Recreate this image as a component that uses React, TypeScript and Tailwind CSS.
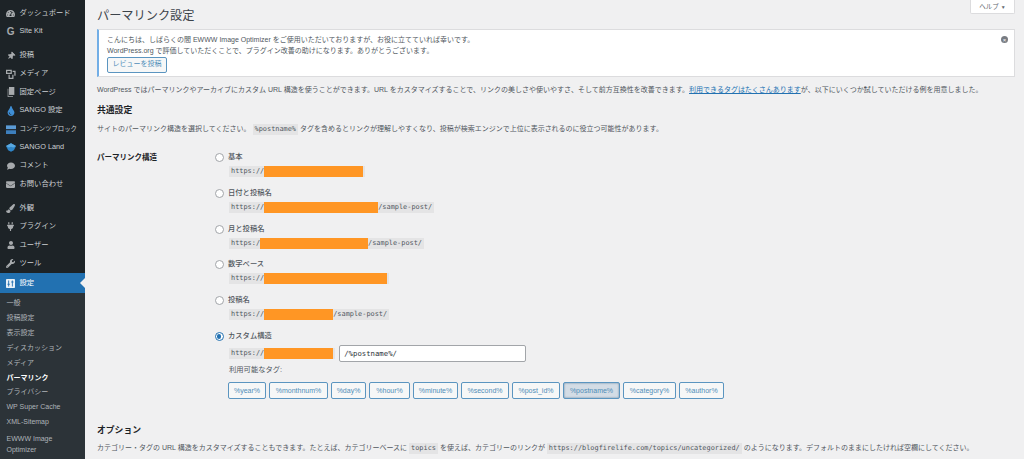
import { ReactNode } from "react";
import {
  FaComment,
  FaEnvelope,
  FaPaintBrush,
  FaPlug,
  FaTachometerAlt,
  FaThumbtack,
  FaTint,
  FaUser,
  FaWrench,
} from "react-icons/fa";

const jp = "font-['Liberation_Sans','Noto_Sans_CJK_JP',sans-serif]";
const mono = "font-['DejaVu_Sans_Mono','Noto_Sans_CJK_JP',monospace]";

function MediaIcon() {
  return (
    <svg viewBox="0 0 12 12" className="w-[10px] h-[10px]" fill="currentColor">
      <path d="M0 1h7v5H0z M1.500 2.500v2h4v-2z" fillRule="evenodd" />
      <path d="M3 7h1.500v3.500h3V7H9v5H3z" />
      <path d="M8 2h3.500v6H10V3.500H8z" />
    </svg>
  );
}

function PageIcon() {
  return (
    <svg viewBox="0 0 12 12" className="w-[8px] h-[10px]" fill="currentColor" preserveAspectRatio="none">
      <path d="M3 0h8v9.500H3z" />
      <path d="M1 2h1v9h7v1H1z" />
    </svg>
  );
}

function BlocksIcon() {
  return (
    <svg viewBox="0 0 14 12" className="w-[10px] h-[9px]" preserveAspectRatio="none">
      <rect x="0" y="0.500" width="14" height="5" fill="#5b9bd5" />
      <rect x="0" y="7" width="14" height="5" fill="#3d7fbd" />
    </svg>
  );
}

function LandIcon() {
  return (
    <svg viewBox="0 0 14 12" className="w-[10px] h-[9px]">
      <path d="M7 0l7 4-3 6-4 2-4-2-3-6z" fill="#2f86c9" />
      <path d="M0 4l7-4 7 4-4 2-3-1-3 1z" fill="#5aa9e0" />
    </svg>
  );
}

function SettingsIcon() {
  return (
    <svg viewBox="0 0 12 12" className="w-[9px] h-[9px]">
      <rect width="12" height="12" rx="1" fill="#e8f1f8" />
      <path d="M3.500 2v8M8.500 2v8" stroke="#2271b1" strokeWidth="1.200" />
      <path d="M2 7h3M7 4h3" stroke="#2271b1" strokeWidth="1.400" />
    </svg>
  );
}

type MenuItem = { label: string; icon: ReactNode; gap?: boolean; small?: boolean };

const menu: MenuItem[] = [
  { label: "ダッシュボード", icon: <FaTachometerAlt size={9} /> },
  { label: "Site Kit", icon: <span className="font-bold text-[10px] leading-none">G</span> },
  { label: "投稿", icon: <FaThumbtack size={8} className="rotate-45" />, gap: true },
  { label: "メディア", icon: <MediaIcon /> },
  { label: "固定ページ", icon: <PageIcon /> },
  { label: "SANGO 設定", icon: <FaTint size={10} color="#3f8fd6" /> },
  { label: "コンテンツブロック", icon: <BlocksIcon />, small: true },
  { label: "SANGO Land", icon: <LandIcon /> },
  { label: "コメント", icon: <FaComment size={8} /> },
  { label: "お問い合わせ", icon: <FaEnvelope size={9} /> },
  { label: "外観", icon: <FaPaintBrush size={9} />, gap: true },
  { label: "プラグイン", icon: <FaPlug size={9} /> },
  { label: "ユーザー", icon: <FaUser size={8} /> },
  { label: "ツール", icon: <FaWrench size={9} /> },
];

const submenu = [
  "一般",
  "投稿設定",
  "表示設定",
  "ディスカッション",
  "メディア",
  "パーマリンク",
  "プライバシー",
  "WP Super Cache",
  "XML-Sitemap",
];

function Sidebar() {
  return (
    <aside className="w-[85px] shrink-0 bg-[#1d2327] text-[#ccd0d3] pt-[4px] text-[7.300px]">
      {menu.map((m) => (
        <div key={m.label} className={`flex items-center h-[18.4px] ${m.gap ? "mt-[5.6px]" : ""}`}>
          <span className="w-[19.500px] pl-[4px] pr-[2px] flex justify-center text-[#a7aaad] shrink-0">{m.icon}</span>
          <span className={`whitespace-nowrap ${m.small ? "text-[6.400px]" : ""}`}>{m.label}</span>
        </div>
      ))}
      <div className="relative flex items-center h-[19.500px] mt-[0.800px] bg-[#2271b1] text-white">
        <span className="w-[19.500px] pl-[4px] pr-[2px] flex justify-center shrink-0">
          <SettingsIcon />
        </span>
        <span>設定</span>
        <span className="absolute right-0 top-[5px] w-0 h-0 border-y-[5px] border-y-transparent border-r-[5px] border-r-[#f0f0f1]" />
      </div>
      <div className="bg-[#2c3338] text-[#aeb3b8] pl-[6.500px] pt-[3px] h-[200px] text-[7px]">
        {submenu.map((s) => (
          <div
            key={s}
            className={`h-[14.900px] flex items-center whitespace-nowrap ${s === "パーマリンク" ? "font-bold text-white" : ""}`}
          >
            {s}
          </div>
        ))}
        <div className="leading-[11px] pt-[3px]">
          EWWW Image
          <br />
          Optimizer
        </div>
      </div>
    </aside>
  );
}

function Code({ children, className = "" }: { children: ReactNode; className?: string }) {
  return (
    <code className={`${mono} inline-block bg-[#e4e4e5] text-[#50575e] text-[6.900px] leading-[11px] px-[2px] ${className}`}>
      {children}
    </code>
  );
}

function Mask({ className }: { className: string }) {
  return <span className={`inline-block align-top h-[11px] bg-[#ff9624] ${className}`} />;
}

function Radio({ checked = false }: { checked?: boolean }) {
  return (
    <span
      className={`w-[9px] h-[9px] rounded-full border bg-white flex items-center justify-center shrink-0 ${
        checked ? "border-[#2271b1]" : "border-[#a2a5a9]"
      }`}
    >
      {checked && <span className="w-[4.500px] h-[4.500px] rounded-full bg-[#2271b1]" />}
    </span>
  );
}

function Option({ label, children, checked }: { label: string; children: ReactNode; checked?: boolean }) {
  return (
    <div className="h-[35.800px]">
      <div className="flex items-center gap-[4.500px] h-[11px] -ml-[14.500px] text-[7.300px] font-medium">
        <Radio checked={checked} />
        <span>{label}</span>
      </div>
      <div className="mt-[3px] flex items-start">{children}</div>
    </div>
  );
}

const tags = [
  { name: "%year%", w: "w-[38px]" },
  { name: "%monthnum%", w: "w-[59px]" },
  { name: "%day%", w: "w-[35px]" },
  { name: "%hour%", w: "w-[41px]" },
  { name: "%minute%", w: "w-[45px]" },
  { name: "%second%", w: "w-[48px]" },
  { name: "%post_id%", w: "w-[48px]" },
  { name: "%postname%", w: "w-[57px]", active: true },
  { name: "%category%", w: "w-[53px]" },
  { name: "%author%", w: "w-[45px]" },
];

export default function App() {
  return (
    <div className={`${jp} flex w-[1024px] h-[459px] overflow-hidden bg-[#f0f0f1] text-[#50575e]`}>
      <Sidebar />
      <main className="relative flex-1 min-w-0 pl-[12px] pr-[9px] text-[7px]">
        <button className="absolute right-[9px] top-0 w-[45px] h-[14px] bg-white border border-t-0 border-[#dcdcde] rounded-b-[2px] text-[6.500px] text-[#646970]">
          ヘルプ <span className="text-[5px]">▼</span>
        </button>

        <h1 className="text-[12.200px] leading-[18px] pt-[7px] pb-[1px] font-normal text-[#3c434a]">パーマリンク設定</h1>

        <div className="relative mt-[3px] h-[48px] bg-white border border-[#dcdcde] border-l-2 border-l-[#72aee6] pl-[8px] pt-[4px]">
          <p className="leading-[11px] whitespace-nowrap">こんにちは、しばらくの間 EWWW Image Optimizer をご使用いただいておりますが、お役に立てていれば幸いです。</p>
          <p className="leading-[11px] whitespace-nowrap">WordPress.org で評価していただくことで、プラグイン改善の助けになります。ありがとうございます。</p>
          <button className="mt-[0.500px] w-[60px] h-[16px] border border-[#5b95c0] rounded-[2px] bg-[#f6f7f7] text-[#4f8db8] text-[7px]">
            レビューを投稿
          </button>
          <span className="absolute right-[6px] top-[6px] w-[7px] h-[7px] rounded-full bg-[#787c82] flex items-center justify-center text-white text-[6px] leading-none">
            ×
          </span>
        </div>

        <p className="mt-[7px] leading-[11px] whitespace-nowrap">
          WordPress ではパーマリンクやアーカイブにカスタム URL 構造を使うことができます。URL をカスタマイズすることで、リンクの美しさや使いやすさ、そして前方互換性を改善できます。
          <a className="text-[#2271b1] underline">利用できるタグはたくさんあります</a>
          が、以下にいくつか試していただける例を用意しました。
        </p>

        <h2 className="mt-[9px] text-[8.800px] leading-[12px] font-bold text-[#1d2327]">共通設定</h2>

        <p className="mt-[7px] leading-[11px] whitespace-nowrap">
          サイトのパーマリンク構造を選択してください。 <Code>%postname%</Code> タグを含めるとリンクが理解しやすくなり、投稿が検索エンジンで上位に表示されるのに役立つ可能性があります。
        </p>

        <div className="flex mt-[17px]">
          <div className="w-[132px] shrink-0 text-[7.500px] leading-[11px] font-bold text-[#1d2327]">パーマリンク構造</div>
          <div className="flex-1">
            <Option label="基本">
              <Code>
                https://
                <Mask className="w-[99px]" />
              </Code>
            </Option>
            <Option label="日付と投稿名">
              <Code>
                https://
                <Mask className="w-[114px]" />
                /sample-post/
              </Code>
            </Option>
            <Option label="月と投稿名">
              <Code>
                https:/
                <Mask className="w-[108px]" />
                /sample-post/
              </Code>
            </Option>
            <Option label="数字ベース">
              <Code>
                https://
                <Mask className="w-[123px]" />
              </Code>
            </Option>
            <Option label="投稿名">
              <Code>
                https://
                <Mask className="w-[69px]" />
                /sample-post/
              </Code>
            </Option>
            <Option label="カスタム構造" checked>
              <Code className="mt-[3px]">
                https://
                <Mask className="w-[69px]" />
              </Code>
              <input
                readOnly
                value="/%postname%/"
                className={`${mono} ml-[4px] w-[187px] h-[17px] bg-white border border-[#a2a5a9] rounded-[2px] px-[4px] text-[7.300px] text-[#2c3338]`}
              />
            </Option>
            <p className="-mt-[3px] leading-[11px] text-[7.300px]">利用可能なタグ:</p>
            <div className="flex gap-[3px] mt-[7px] -ml-[1px]">
              {tags.map((t) => (
                <button
                  key={t.name}
                  className={`${t.w} h-[17px] border border-[#5b95c0] rounded-[2px] text-[#4f8db8] text-[7px] leading-none ${
                    t.active ? "bg-[#d3dce5] border-[#4f7c9e] text-[#3f7ba5] shadow-[inset_0_0_2px_#5a7a96]" : "bg-[#f6f7f7]"
                  }`}
                >
                  {t.name}
                </button>
              ))}
            </div>
          </div>
        </div>

        <h2 className="mt-[25px] text-[8.800px] leading-[12px] font-bold text-[#1d2327]">オプション</h2>
        <p className="mt-[6px] leading-[11px] whitespace-nowrap">
          カテゴリー・タグの URL 構造をカスタマイズすることもできます。たとえば、カテゴリーベースに <Code>topics</Code> を使えば、カテゴリーのリンクが{" "}
          <Code>https://blogfirelife.com/topics/uncategorized/</Code> のようになります。デフォルトのままにしたければ空欄にしてください。
        </p>
      </main>
    </div>
  );
}
